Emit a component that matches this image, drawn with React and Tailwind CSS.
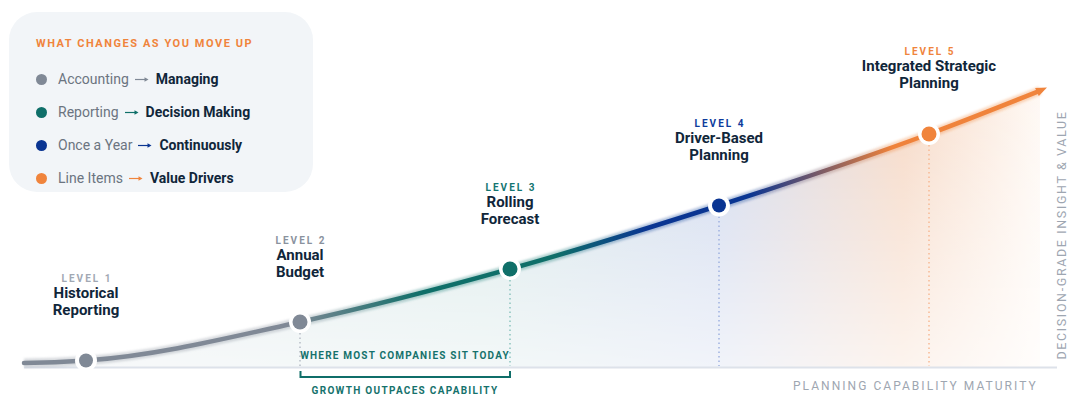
import React from 'react';

// chart knots: [x, y, slope] in page pixels
const knots = [
  [24, 363, -0.01],
  [86, 360.5, -0.07],
  [300, 322, -0.22],
  [510, 269, -0.28],
  [719, 205.5, -0.32],
  [929, 134, -0.37],
  [1040, 90.7, -0.4],
];

function curvePath(k) {
  let d = `M${k[0][0]},${k[0][1]}`;
  for (let i = 0; i < k.length - 1; i++) {
    const [x0, y0, s0] = k[i];
    const [x1, y1, s1] = k[i + 1];
    const t = (x1 - x0) / 3;
    d += ` C${x0 + t},${y0 + s0 * t} ${x1 - t},${y1 - s1 * t} ${x1},${y1}`;
  }
  return d;
}

const line = curvePath(knots);
const area = `${line} L1040,367 L24,367 Z`;

const levels = [
  { n: 1, x: 86, y: 360.5, top: 271.5, title: ['Historical', 'Reporting'], label: 'text-[#a1a8b3]', dot: '#808996', drop: null, r: 7 },
  { n: 2, x: 300, y: 322, top: 233.5, title: ['Annual', 'Budget'], label: 'text-[#8a929e]', dot: '#808996', drop: '#b7bdc6', r: 7.5 },
  { n: 3, x: 510, y: 269, top: 180.5, title: ['Rolling', 'Forecast'], label: 'text-[#137571]', dot: '#0f6f69', drop: '#8cc4bf', r: 7.5 },
  { n: 4, x: 719, y: 205.5, top: 116.5, title: ['Driver-Based', 'Planning'], label: 'text-[#0d3b9c]', dot: '#0a3592', drop: '#9fb1df', r: 7 },
  { n: 5, x: 929, y: 134, top: 44.5, title: ['Integrated Strategic', 'Planning'], label: 'text-[#f0843c]', dot: '#f0843c', drop: '#f8b994', r: 7.5 },
];

const legend = [
  { from: 'Accounting', to: 'Managing', dot: 'bg-[#808996]', arrow: '#808996' },
  { from: 'Reporting', to: 'Decision Making', dot: 'bg-[#0f6f69]', arrow: '#0f6f69' },
  { from: 'Once a Year', to: 'Continuously', dot: 'bg-[#0a3592]', arrow: '#0a3592' },
  { from: 'Line Items', to: 'Value Drivers', dot: 'bg-[#f0843c]', arrow: '#f0843c' },
];

function Arrow({ color }) {
  return (
    <svg className="ml-[6px] mr-[7px] inline-block" width="14" height="8" viewBox="0 0 14 8" aria-hidden>
      <line x1="0" y1="4.5" x2="12" y2="4.5" stroke={color} strokeWidth="1.2" />
      <path d="M9.5,2.3 L13.5,4.5 L9.5,6.7 Z" fill={color} />
    </svg>
  );
}

function Chart() {
  return (
    <svg className="absolute inset-0" width="1085" height="401" viewBox="0 0 1085 401" aria-hidden>
      <defs>
        <linearGradient id="stroke" gradientUnits="userSpaceOnUse" x1="24" y1="0" x2="1046" y2="0">
          <stop offset="0" stopColor="#808996" />
          <stop offset="0.26" stopColor="#808996" />
          <stop offset="0.39" stopColor="#0f6f69" />
          <stop offset="0.52" stopColor="#0f6f69" />
          <stop offset="0.61" stopColor="#0a3592" />
          <stop offset="0.71" stopColor="#0a3592" />
          <stop offset="0.85" stopColor="#ef823a" />
          <stop offset="1" stopColor="#f0843c" />
        </linearGradient>
        <linearGradient id="fill" gradientUnits="userSpaceOnUse" x1="24" y1="0" x2="1046" y2="0">
          <stop offset="0" stopColor="#e6eaee" />
          <stop offset="0.45" stopColor="#d6e7e7" />
          <stop offset="0.68" stopColor="#d0d9ee" />
          <stop offset="0.86" stopColor="#f6d9c6" />
          <stop offset="1" stopColor="#fffaf6" />
        </linearGradient>
        <linearGradient id="fade" gradientUnits="userSpaceOnUse" x1="0" y1="90" x2="0" y2="367">
          <stop offset="0" stopColor="#fff" stopOpacity="1" />
          <stop offset="1" stopColor="#fff" stopOpacity="0.3" />
        </linearGradient>
        <mask id="areaMask">
          <rect x="0" y="0" width="1085" height="401" fill="url(#fade)" />
        </mask>
        <filter id="soft" x="-5%" y="-20%" width="110%" height="140%">
          <feGaussianBlur stdDeviation="1.2" />
        </filter>
      </defs>

      <path d={area} fill="url(#fill)" mask="url(#areaMask)" />

      <line x1="24" y1="367.5" x2="1057" y2="367.5" stroke="#dde2ea" strokeWidth="2" />

      {levels.filter((l) => l.drop).map((l) => (
        <line
          key={l.n}
          x1={l.x}
          y1={l.y + 11}
          x2={l.x}
          y2="366"
          stroke={l.drop}
          strokeWidth="1.5"
          strokeDasharray="1.5 3"
        />
      ))}

      <path d="M300.5,371 V377 H510 V371" fill="none" stroke="#0f6e69" strokeWidth="2" />

      <path d={line} fill="none" stroke="url(#stroke)" strokeWidth="9" strokeOpacity="0.3" filter="url(#soft)" />
      <path d={line} fill="none" stroke="url(#stroke)" strokeWidth="4.5" strokeLinecap="round" />
      <polygon points="1047,87.5 1038.8,96.1 1035.1,87.9" fill="#f0843c" />

      {levels.map((l) => (
        <g key={l.n}>
          <circle cx={l.x} cy={l.y} r="11" fill="#fff" />
          <circle cx={l.x} cy={l.y} r={l.r} fill={l.dot} />
        </g>
      ))}
    </svg>
  );
}

export default function App() {
  return (
    <div className="relative h-[401px] w-[1085px] overflow-hidden bg-white pl-[9px] pt-3 font-['Roboto',sans-serif]">
      <Chart />

      <div className="relative h-[180px] w-[304px] rounded-[28px] bg-[#f2f5f8] pl-[27px] pt-[25px]">
        <p className="text-[11px] font-bold uppercase leading-[14px] tracking-[0.14em] text-[#f0843c]">
          What changes as you move up
        </p>
        <ul className="mt-[18px] flex flex-col gap-[13px]">
          {legend.map((row) => (
            <li key={row.from} className="flex items-center gap-[11px] text-[14px] leading-[20px]">
              <span className={`h-[11px] w-[11px] rounded-full ${row.dot}`} />
              <span className="flex items-center text-[#6b7480]">
                {row.from}
                <Arrow color={row.arrow} />
                <span className="font-bold text-[#10263a]">{row.to}</span>
              </span>
            </li>
          ))}
        </ul>
      </div>

      {levels.map((l) => (
        <div
          key={l.n}
          className="absolute -translate-x-1/2 whitespace-nowrap text-center"
          style={{ left: l.x, top: l.top }}
        >
          <p className={`pl-[0.2em] text-[10px] font-bold leading-[13px] tracking-[0.2em] ${l.label}`}>LEVEL {l.n}</p>
          <p className="text-[15px] font-bold leading-[17px] text-[#10263a]">
            {l.title[0]}
            <br />
            {l.title[1]}
          </p>
        </div>
      ))}

      <p className="absolute left-[405px] top-[350px] -translate-x-1/2 whitespace-nowrap text-[10px] font-bold leading-[12px] tracking-[0.12em] text-[#16726c]">
        WHERE MOST COMPANIES SIT TODAY
      </p>
      <p className="absolute left-[405px] top-[385px] -translate-x-1/2 whitespace-nowrap text-[10px] font-bold leading-[12px] tracking-[0.13em] text-[#16726c]">
        GROWTH OUTPACES CAPABILITY
      </p>

      <p className="absolute left-[793px] top-[378px] whitespace-nowrap text-[12px] leading-[16px] tracking-[0.17em] text-[#9ea6b1]">
        PLANNING CAPABILITY MATURITY
      </p>
      <p className="absolute left-[1062px] top-[235px] -translate-x-1/2 -translate-y-1/2 -rotate-90 whitespace-nowrap text-[12.5px] leading-[14px] tracking-[0.13em] text-[#9ea6b1]">
        DECISION-GRADE INSIGHT &amp; VALUE
      </p>
    </div>
  );
}
